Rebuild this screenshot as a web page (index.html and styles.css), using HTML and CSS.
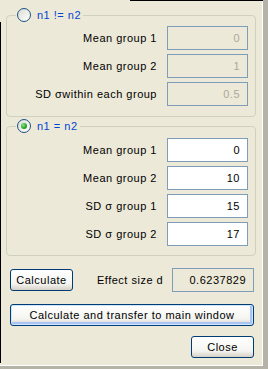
FILE: index.html
```html
<!DOCTYPE html>
<html>
<head>
  <title>Effect size</title>
  <link rel="stylesheet" href="styles.css">
</head>
<body>
  <div class="window">
    <fieldset class="group">
      <legend><span class="radio"></span><span class="caption">n1 != n2</span></legend>
      <div class="rows">
        <label>Mean group 1</label><div class="field disabled">0</div>
        <label>Mean group 2</label><div class="field disabled">1</div>
        <label>SD &sigma;within each group</label><div class="field disabled">0.5</div>
      </div>
    </fieldset>

    <fieldset class="group second">
      <legend><span class="radio checked"></span><span class="caption">n1 = n2</span></legend>
      <div class="rows">
        <label>Mean group 1</label><div class="field">0</div>
        <label>Mean group 2</label><div class="field">10</div>
        <label>SD &sigma; group 1</label><div class="field">15</div>
        <label>SD &sigma; group 2</label><div class="field">17</div>
      </div>
    </fieldset>

    <div class="result">
      <button class="btn calc">Calculate</button>
      <span class="result-label">Effect size d</span>
      <div class="field readonly">0.6237829</div>
    </div>

    <button class="btn wide">Calculate and transfer to main window</button>

    <div class="footer">
      <button class="btn close">Close</button>
    </div>
  </div>
</body>
</html>
```

FILE: styles.css
```css
html {
  background: #b5b3a8;
}
body {
  margin: 0;
  font-family: "Liberation Sans", Arial, sans-serif;
  font-size: 11px;
  letter-spacing: 0.5px;
  color: #000;
}
.window {
  position: relative;
  box-sizing: border-box;
  width: 263px;
  height: 366px;
  padding: 8px 7px 0 6px;
  background: #ece9d8;
  border-right: 1px solid #fff;
  border-bottom: 1px solid #fff;
}
/* dark edges left over from the screen grab */
.window::before {
  content: "";
  position: absolute;
  left: 0;
  top: 22px;
  bottom: 2px;
  width: 1px;
  background: #000;
}
.window::after {
  content: "";
  position: absolute;
  left: 130px;
  right: -1px;
  top: 0;
  height: 1px;
  background: #000;
}

.group {
  margin: 0;
  padding: 4px 7px 10px 0;
  width: 250px;
  box-sizing: border-box;
  border: 1px solid #d0d0bf;
  border-radius: 4px;
}
.group.second {
  margin-top: 2px;
  padding-top: 5px;
  padding-bottom: 9px;
}
legend {
  display: flex;
  align-items: center;
  height: 14px;
  margin-left: 9px;
  padding: 0 2px 0 1px;
}
.radio {
  position: relative;
  width: 12px;
  height: 12px;
  border: 1px solid #1c5180;
  border-radius: 50%;
  background: linear-gradient(135deg, #dcdcd4, #fff);
}
.radio.checked::after {
  content: "";
  position: absolute;
  left: 3px;
  top: 3px;
  width: 6px;
  height: 6px;
  border-radius: 50%;
  background: radial-gradient(circle at 35% 35%, #8de58d, #21a121 60%, #1a7f1a);
}
.caption {
  margin-left: 6px;
  color: #0046d5;
}

.rows {
  display: grid;
  grid-template-columns: 1fr 81px;
  column-gap: 10px;
  row-gap: 4px;
  align-items: center;
}
.rows label {
  text-align: right;
}
.field {
  box-sizing: border-box;
  height: 24px;
  padding: 0 7px;
  line-height: 22px;
  text-align: right;
  background: #fff;
  border: 1px solid #7f9db9;
}
.field.disabled {
  background: #ece9d8;
  color: #aca899;
}

.result {
  display: flex;
  align-items: center;
  margin: 12px 0 0 4px;
}
.result-label {
  margin-left: 24px;
  white-space: nowrap;
}
.field.readonly {
  flex: none;
  width: 82px;
  margin: 0 1px 0 auto;
  background: #ece9d8;
}

.btn {
  flex: none;
  box-sizing: border-box;
  height: 22px;
  padding: 0;
  font-family: inherit;
  font-size: 11px;
  letter-spacing: 0.5px;
  color: #000;
  border: 1px solid #003c74;
  border-radius: 3px;
  background: linear-gradient(#fff, #f4f4f0 70%, #d6d0c5);
  cursor: pointer;
}
.btn.calc {
  width: 63px;
}
.btn.wide {
  display: block;
  width: 244px;
  margin: 12px 0 0 4px;
  box-shadow: inset 0 0 0 1px #cee7ff, inset -1px -1px 0 2px #a9c3f5;
}
.footer {
  display: flex;
  justify-content: flex-end;
  margin: 10px 1px 0 0;
}
.btn.close {
  width: 63px;
}
```
